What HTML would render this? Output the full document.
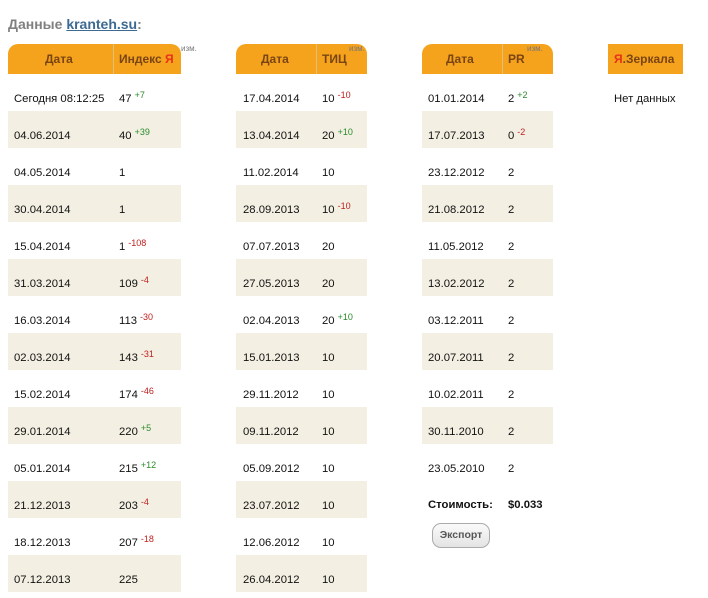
<!DOCTYPE html>
<html><head><meta charset="utf-8"><style>
body{margin:0;width:708px;height:598px;background:#fff;font-family:"Liberation Sans","DejaVu Sans",sans-serif;font-size:11.3px;color:#111;position:relative;overflow:hidden}
.t{position:absolute;font-weight:bold;font-size:14px;color:#808080;left:8px;top:16px}
.t a{color:#3d6a92;text-decoration:underline}
.tb{position:absolute;top:44px}
.h{height:30px;background:#f5a21c;border-radius:10px 10px 0 0;position:relative;font-weight:bold;color:#7a4514;font-size:12px}
.h span{position:absolute;top:0;line-height:30px}
.sep{position:absolute;top:0;width:1px;height:30px;background:#e3c07a}
.r{height:37px;position:relative}
.r:nth-child(even){background:#f3f0e3}
.r span{position:absolute;top:18px;line-height:14px}
sup{font-size:9px;position:relative;top:-4px;vertical-align:baseline;margin-left:3px}
.g{color:#2a8a2a}.d{color:#c02020}
.iz{font-size:8px;color:#777;font-weight:normal;position:absolute;top:4px}
</style></head><body>
<div class="t">Данные <a>kranteh.su</a>:</div>

<div class="tb" style="left:8px;width:173px">
<div class="h"><span style="left:37px">Дата</span><div class="sep" style="left:105px"></div><span style="left:111px">Индекс <b style="color:#e8321a">Я</b></span><span class="iz" style="left:173px;line-height:10px">изм.</span></div>
<div>
<div class="r"><span style="left:6px">Сегодня 08:12:25</span><span style="left:111px">47<sup class="g">+7</sup></span></div>
<div class="r"><span style="left:6px">04.06.2014</span><span style="left:111px">40<sup class="g">+39</sup></span></div>
<div class="r"><span style="left:6px">04.05.2014</span><span style="left:111px">1</span></div>
<div class="r"><span style="left:6px">30.04.2014</span><span style="left:111px">1</span></div>
<div class="r"><span style="left:6px">15.04.2014</span><span style="left:111px">1<sup class="d">-108</sup></span></div>
<div class="r"><span style="left:6px">31.03.2014</span><span style="left:111px">109<sup class="d">-4</sup></span></div>
<div class="r"><span style="left:6px">16.03.2014</span><span style="left:111px">113<sup class="d">-30</sup></span></div>
<div class="r"><span style="left:6px">02.03.2014</span><span style="left:111px">143<sup class="d">-31</sup></span></div>
<div class="r"><span style="left:6px">15.02.2014</span><span style="left:111px">174<sup class="d">-46</sup></span></div>
<div class="r"><span style="left:6px">29.01.2014</span><span style="left:111px">220<sup class="g">+5</sup></span></div>
<div class="r"><span style="left:6px">05.01.2014</span><span style="left:111px">215<sup class="g">+12</sup></span></div>
<div class="r"><span style="left:6px">21.12.2013</span><span style="left:111px">203<sup class="d">-4</sup></span></div>
<div class="r"><span style="left:6px">18.12.2013</span><span style="left:111px">207<sup class="d">-18</sup></span></div>
<div class="r"><span style="left:6px">07.12.2013</span><span style="left:111px">225</span></div>
</div></div>

<div class="tb" style="left:236px;width:131px">
<div class="h"><span style="left:25px">Дата</span><div class="sep" style="left:80px"></div><span style="left:86px">ТИЦ</span><span class="iz" style="left:113px;line-height:10px">изм.</span></div>
<div>
<div class="r"><span style="left:7px">17.04.2014</span><span style="left:86px">10<sup class="d">-10</sup></span></div>
<div class="r"><span style="left:7px">13.04.2014</span><span style="left:86px">20<sup class="g">+10</sup></span></div>
<div class="r"><span style="left:7px">11.02.2014</span><span style="left:86px">10</span></div>
<div class="r"><span style="left:7px">28.09.2013</span><span style="left:86px">10<sup class="d">-10</sup></span></div>
<div class="r"><span style="left:7px">07.07.2013</span><span style="left:86px">20</span></div>
<div class="r"><span style="left:7px">27.05.2013</span><span style="left:86px">20</span></div>
<div class="r"><span style="left:7px">02.04.2013</span><span style="left:86px">20<sup class="g">+10</sup></span></div>
<div class="r"><span style="left:7px">15.01.2013</span><span style="left:86px">10</span></div>
<div class="r"><span style="left:7px">29.11.2012</span><span style="left:86px">10</span></div>
<div class="r"><span style="left:7px">09.11.2012</span><span style="left:86px">10</span></div>
<div class="r"><span style="left:7px">05.09.2012</span><span style="left:86px">10</span></div>
<div class="r"><span style="left:7px">23.07.2012</span><span style="left:86px">10</span></div>
<div class="r"><span style="left:7px">12.06.2012</span><span style="left:86px">10</span></div>
<div class="r"><span style="left:7px">26.04.2012</span><span style="left:86px">10</span></div>
</div></div>

<div class="tb" style="left:422px;width:131px">
<div class="h"><span style="left:24px">Дата</span><div class="sep" style="left:80px"></div><span style="left:86px">PR</span><span class="iz" style="left:105px;line-height:10px">изм.</span></div>
<div>
<div class="r"><span style="left:6px">01.01.2014</span><span style="left:86px">2<sup class="g">+2</sup></span></div>
<div class="r"><span style="left:6px">17.07.2013</span><span style="left:86px">0<sup class="d">-2</sup></span></div>
<div class="r"><span style="left:6px">23.12.2012</span><span style="left:86px">2</span></div>
<div class="r"><span style="left:6px">21.08.2012</span><span style="left:86px">2</span></div>
<div class="r"><span style="left:6px">11.05.2012</span><span style="left:86px">2</span></div>
<div class="r"><span style="left:6px">13.02.2012</span><span style="left:86px">2</span></div>
<div class="r"><span style="left:6px">03.12.2011</span><span style="left:86px">2</span></div>
<div class="r"><span style="left:6px">20.07.2011</span><span style="left:86px">2</span></div>
<div class="r"><span style="left:6px">10.02.2011</span><span style="left:86px">2</span></div>
<div class="r"><span style="left:6px">30.11.2010</span><span style="left:86px">2</span></div>
<div class="r"><span style="left:6px">23.05.2010</span><span style="left:86px">2</span></div>
</div></div>
<div style="position:absolute;left:428px;top:499px;font-weight:bold">Стоимость:</div>
<div style="position:absolute;left:508px;top:499px;font-weight:bold">$0.033</div>
<div style="position:absolute;left:432px;top:523px;width:56px;height:23px;border:1px solid #aaa;border-radius:9px;background:linear-gradient(#fafafa,#e4e4e4);font-weight:bold;color:#555;font-size:10.5px;line-height:23px;text-align:center">Экспорт</div>

<div class="tb" style="left:608px;width:75px">
<div class="h" style="border-radius:0"><span style="left:6px"><b style="color:#e8321a">Я</b>.Зеркала</span></div>
<div style="position:relative"><span style="position:absolute;left:6px;top:18px;line-height:14px">Нет данных</span></div>
</div>
</body></html>
